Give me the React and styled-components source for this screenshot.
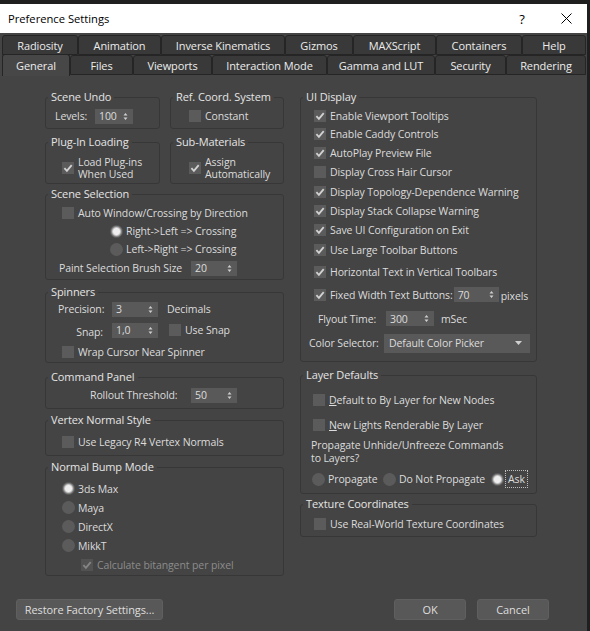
import React from "react";
import styled, { createGlobalStyle } from "styled-components";

const FONT = `"Open Sans", "Noto Sans", "DejaVu Sans", sans-serif`;

const GlobalStyle = createGlobalStyle`
  html, body {
    margin: 0;
    padding: 0;
    background: #222222;
  }
  body {
    font-family: ${FONT};
  }
`;

const Screen = styled.div`
  width: 590px;
  height: 631px;
  padding-top: 4px;
  box-sizing: border-box;
  overflow: hidden;
  background: #1f1f1f;
`;

const Window = styled.div`
  width: 587px;
  height: 627px;
  background: #444444;
  display: flex;
  flex-direction: column;
  font-family: ${FONT};
  font-size: 10.5px;
  letter-spacing: -0.1px;
  color: #dcdcdc;
`;

const TitleBar = styled.div`
  height: 29px;
  flex: none;
  background: #ffffff;
  color: #000000;
  display: flex;
  align-items: center;
  padding-left: 8px;
  font-size: 11.2px;
  letter-spacing: 0;
`;

const TitleText = styled.span`
  flex: 1;
`;

const TitleButton = styled.span`
  width: ${(p) => p.$w}px;
  height: 29px;
  display: flex;
  align-items: center;
  justify-content: center;
  font-size: 13px;
`;

const TabStrip = styled.div`
  flex: none;
  padding: 2px 0 0 2px;
  display: flex;
  flex-direction: column;
`;

const TabRow = styled.div`
  display: flex;
  height: 20px;
  align-items: flex-end;
`;

const Tab = styled.div`
  width: ${(p) => p.$w}px;
  height: ${(p) => (p.$active ? 22 : 20)}px;
  margin-bottom: ${(p) => (p.$active ? -1 : 0)}px;
  box-sizing: border-box;
  display: flex;
  align-items: center;
  justify-content: center;
  background: ${(p) => (p.$active ? "#474747" : "#393939")};
  border: 1px solid #252525;
  border-bottom: ${(p) => (p.$active ? "none" : "1px solid #252525")};
  border-radius: 3px 3px 0 0;
  color: #ececec;
  font-size: 11px;
  position: relative;
  z-index: ${(p) => (p.$active ? 1 : 0)};
`;

const Body = styled.div`
  display: grid;
  grid-template-columns: 239px 237px;
  column-gap: 16px;
  padding: 15px 0 0 45px;
  align-items: start;
`;

const Column = styled.div`
  display: flex;
  flex-direction: column;
`;

const Pair = styled.div`
  display: grid;
  grid-template-columns: 115px 114px;
  column-gap: 10px;
  margin-top: ${(p) => p.$mt || 0}px;
`;

const Group = styled.fieldset`
  margin: ${(p) => p.$mt || 0}px 0 0;
  padding: ${(p) => p.$pt || 0}px 0 ${(p) => p.$pb || 0}px;
  border: 1px solid #373737;
  border-radius: 3px;
  min-width: 0;
`;

const Legend = styled.legend`
  margin-left: 2px;
  padding: 0 3px;
  line-height: 14px;
  font-size: 11px;
  color: #e4e4e4;
`;

const Row = styled.div`
  display: flex;
  align-items: center;
  height: ${(p) => p.$h || 20}px;
  padding-left: ${(p) => p.$in || 0}px;
  gap: ${(p) => p.$gap ?? 4}px;
  color: ${(p) => (p.$dim ? "#8c8c8c" : "inherit")};
  white-space: nowrap;
`;

const Label = styled.span`
  flex: none;
  width: ${(p) => (p.$w ? `${p.$w}px` : "auto")};
  text-align: ${(p) => (p.$right ? "right" : "left")};
  padding-right: ${(p) => (p.$right ? 9 : 0)}px;
  box-sizing: border-box;
  line-height: ${(p) => p.$lh || 14}px;
`;

const Lines = styled.div`
  line-height: ${(p) => p.$lh || 13}px;
  padding-left: ${(p) => p.$in || 0}px;
`;

const CheckBox = styled.span`
  flex: none;
  width: 12px;
  height: 12px;
  background: ${(p) => (p.$dim ? "#525252" : "#5b5b5b")};
  display: flex;
`;

const RadioDot = styled.span`
  flex: none;
  width: 13px;
  height: 13px;
  border-radius: 50%;
  background: ${(p) =>
    p.$on
      ? "radial-gradient(circle, #eeeeee 0 3px, #c4c4c4 4px, #858585 5px, #5b5b5b 6px)"
      : "#5b5b5b"};
`;

const RadioItem = styled.span`
  flex: none;
  width: ${(p) => (p.$w ? `${p.$w}px` : "auto")};
  display: flex;
  align-items: center;
  gap: 3px;
`;

const Focus = styled.span`
  outline: 1px dotted #bdbdbd;
  outline-offset: 1px;
  padding: 0 1px;
`;

const SpinBox = styled.span`
  flex: none;
  width: ${(p) => p.$w}px;
  height: ${(p) => p.$h || 15}px;
  box-sizing: border-box;
  background: #595959;
  display: flex;
  align-items: center;
  justify-content: space-between;
  padding: 0 5px 0 4px;
  color: #dcdcdc;
`;

const DropBox = styled(SpinBox)`
  padding: 0 8px 0 5px;
`;

const Footer = styled.div`
  margin-top: auto;
  display: flex;
  align-items: flex-end;
  padding: 0 38px 11px 16px;
`;

const Button = styled.div`
  width: ${(p) => p.$w}px;
  height: 21px;
  margin-left: ${(p) => (p.$push ? "auto" : `${p.$ml || 0}px`)};
  box-sizing: border-box;
  background: #585858;
  border: 1px solid #5f5f5f;
  border-radius: 3px;
  display: flex;
  align-items: center;
  justify-content: center;
  color: #dedede;
  font-size: 11px;
`;

const Tick = ({ dim }) => (
  <svg width="12" height="12" viewBox="0 0 12 12">
    <path
      d="M2.4 6.2 L4.9 8.8 L9.7 3.1"
      fill="none"
      stroke={dim ? "#858585" : "#d2d2d2"}
      strokeWidth="1.8"
    />
  </svg>
);

const Check = ({ on, dim }) => (
  <CheckBox $dim={dim}>{on && <Tick dim={dim} />}</CheckBox>
);

const Arrows = () => (
  <svg width="5" height="9" viewBox="0 0 5 9">
    <path d="M0.5 3.5 L2.5 1 L4.5 3.5 Z M0.5 5.5 L2.5 8 L4.5 5.5 Z" fill="#cfcfcf" />
  </svg>
);

const Spinner = ({ value, w }) => (
  <SpinBox $w={w}>
    <span>{value}</span>
    <Arrows />
  </SpinBox>
);

const CheckRow = ({ on, dim, text, h, ind }) => (
  <Row $h={h} $in={ind} $dim={dim}>
    <Check on={on} dim={dim} />
    <span>{text}</span>
  </Row>
);

const Radio = ({ on, text, w, focus }) => (
  <RadioItem $w={w}>
    <RadioDot $on={on} />
    {focus ? <Focus>{text}</Focus> : <span>{text}</span>}
  </RadioItem>
);

const tabsTop = [
  ["Radiosity", 76],
  ["Animation", 83],
  ["Inverse Kinematics", 124],
  ["Gizmos", 68],
  ["MAXScript", 83],
  ["Containers", 86],
  ["Help", 64],
];

const tabsBottom = [
  ["General", 68],
  ["Files", 63],
  ["Viewports", 79],
  ["Interaction Mode", 115],
  ["Gamma and LUT", 108],
  ["Security", 71],
  ["Rendering", 80],
];

const uiRows = [
  ["Enable Viewport Tooltips", true, 18],
  ["Enable Caddy Controls", true, 18],
  ["AutoPlay Preview File", true, 19],
  ["Display Cross Hair Cursor", false, 20],
  ["Display Topology-Dependence Warning", true, 19],
  ["Display Stack Collapse Warning", true, 20],
  ["Save UI Configuration on Exit", true, 18],
  ["Use Large Toolbar Buttons", true, 22],
  ["Horizontal Text in Vertical Toolbars", true, 22],
];

const bumpModes = [
  ["3ds Max", true],
  ["Maya", false],
  ["DirectX", false],
  ["MikkT", false],
];

export default function App() {
  return (
    <Screen>
      <GlobalStyle />
      <Window>
        <TitleBar>
          <TitleText>Preference Settings</TitleText>
          <TitleButton $w={46}>?</TitleButton>
          <TitleButton $w={42}>
            <svg width="11" height="11" viewBox="0 0 11 11">
              <path d="M0.5 0.5 L10.5 10.5 M10.5 0.5 L0.5 10.5" stroke="#000" strokeWidth="1" />
            </svg>
          </TitleButton>
        </TitleBar>

        <TabStrip>
          <TabRow>
            {tabsTop.map(([name, w]) => (
              <Tab key={name} $w={w}>
                {name}
              </Tab>
            ))}
          </TabRow>
          <TabRow>
            {tabsBottom.map(([name, w]) => (
              <Tab key={name} $w={w} $active={name === "General"}>
                {name}
              </Tab>
            ))}
          </TabRow>
        </TabStrip>

        <Body>
          <Column>
            <Pair>
              <Group $pt={2} $pb={2}>
                <Legend>Scene Undo</Legend>
                <Row $in={9} $gap={0}>
                  <Label $w={40}>Levels:</Label>
                  <Spinner value="100" w={38} />
                </Row>
              </Group>
              <Group $pt={2} $pb={2}>
                <Legend>Ref. Coord. System</Legend>
                <CheckRow ind={18} text="Constant" />
              </Group>
            </Pair>

            <Pair $mt={6}>
              <Group $pt={7} $pb={3}>
                <Legend>Plug-In Loading</Legend>
                <Row $in={16} $h={24}>
                  <Check on />
                  <Lines $lh={12.5}>
                    Load Plug-ins
                    <br />
                    When Used
                  </Lines>
                </Row>
              </Group>
              <Group $pt={7} $pb={3}>
                <Legend>Sub-Materials</Legend>
                <Row $in={18} $h={24}>
                  <Check on />
                  <Lines $lh={12.5}>
                    Assign
                    <br />
                    Automatically
                  </Lines>
                </Row>
              </Group>
            </Pair>

            <Group $mt={3} $pt={3} $pb={1}>
              <Legend>Scene Selection</Legend>
              <CheckRow h={18} ind={16} text="Auto Window/Crossing by Direction" />
              <Row $h={18} $in={64}>
                <Radio on text="Right->Left => Crossing" />
              </Row>
              <Row $h={18} $in={64}>
                <Radio text="Left->Right => Crossing" />
              </Row>
              <Row $h={20} $in={13} $gap={0}>
                <Label $w={132}>Paint Selection Brush Size</Label>
                <Spinner value="20" w={46} />
              </Row>
            </Group>

            <Group $mt={5}>
              <Legend>Spinners</Legend>
              <Row $h={20} $in={12} $gap={0}>
                <Label $w={54} $right>
                  Precision:
                </Label>
                <Spinner value="3" w={46} />
                <Label style={{ marginLeft: 9 }}>Decimals</Label>
              </Row>
              <Row $h={22} $in={12} $gap={0}>
                <Label $w={54} $right style={{ marginTop: 4 }}>
                  Snap:
                </Label>
                <Spinner value="1,0" w={46} />
                <RadioItem style={{ marginLeft: 11, gap: 4 }}>
                  <Check />
                  <span>Use Snap</span>
                </RadioItem>
              </Row>
              <CheckRow h={21} ind={16} text="Wrap Cursor Near Spinner" />
            </Group>

            <Group $mt={7} $pb={2}>
              <Legend>Command Panel</Legend>
              <Row $h={22} $in={44} $gap={0}>
                <Label $w={101}>Rollout Threshold:</Label>
                <Spinner value="50" w={46} />
              </Row>
            </Group>

            <Group $mt={4} $pt={5} $pb={3}>
              <Legend>Vertex Normal Style</Legend>
              <CheckRow ind={16} text="Use Legacy R4 Vertex Normals" />
            </Group>

            <Group $mt={4} $pt={5}>
              <Legend>Normal Bump Mode</Legend>
              {bumpModes.map(([name, on]) => (
                <Row key={name} $h={19} $in={16}>
                  <Radio on={on} text={name} />
                </Row>
              ))}
              <CheckRow on dim h={20} ind={35} text="Calculate bitangent per pixel" />
            </Group>
          </Column>

          <Column>
            <Group $pt={3} $pb={6}>
              <Legend>UI Display</Legend>
              {uiRows.map(([text, on, h]) => (
                <CheckRow key={text} on={on} h={h} ind={13} text={text} />
              ))}
              <Row $h={23} $in={13} $gap={0}>
                <Check on />
                <Label style={{ paddingLeft: 4, marginRight: 1 }}>
                  Fixed Width Text Buttons:
                </Label>
                <Spinner value="70" w={45} />
                <Label style={{ marginLeft: 2, marginTop: 3 }}>pixels</Label>
              </Row>
              <Row $h={25} $in={17} $gap={0}>
                <Label $w={68}>Flyout Time:</Label>
                <Spinner value="300" w={48} />
                <Label style={{ marginLeft: 7 }}>mSec</Label>
              </Row>
              <Row $h={24} $in={8} $gap={0}>
                <Label $w={75}>Color Selector:</Label>
                <DropBox $w={146} $h={19}>
                  <span>Default Color Picker</span>
                  <svg width="7" height="4" viewBox="0 0 7 4">
                    <path d="M0 0 L7 0 L3.5 4 Z" fill="#d0d0d0" />
                  </svg>
                </DropBox>
              </Row>
            </Group>

            <Group $mt={6} $pt={5}>
              <Legend>Layer Defaults</Legend>
              <Row $h={25} $in={12}>
                <Check />
                <span>
                  <u>D</u>efault to By Layer for New Nodes
                </span>
              </Row>
              <Row $h={26} $in={12}>
                <Check />
                <span>
                  <u>N</u>ew Lights Renderable By Layer
                </span>
              </Row>
              <Lines $in={10} style={{ paddingTop: 1 }}>
                Propagate Unhide/Unfreeze Commands
                <br />
                to Layers?
              </Lines>
              <Row $h={28} $in={11} $gap={0}>
                <Radio text="Propagate" w={71} />
                <Radio text="Do Not Propagate" w={108} />
                <Radio on focus text="Ask" />
              </Row>
            </Group>

            <Group $mt={3} $pt={3} $pb={2}>
              <Legend>Texture Coordinates</Legend>
              <CheckRow ind={13} text="Use Real-World Texture Coordinates" />
            </Group>
          </Column>
        </Body>

        <Footer>
          <Button $w={147}>Restore Factory Settings...</Button>
          <Button $w={72} $push>
            OK
          </Button>
          <Button $w={72} $ml={11}>
            Cancel
          </Button>
        </Footer>
      </Window>
    </Screen>
  );
}
